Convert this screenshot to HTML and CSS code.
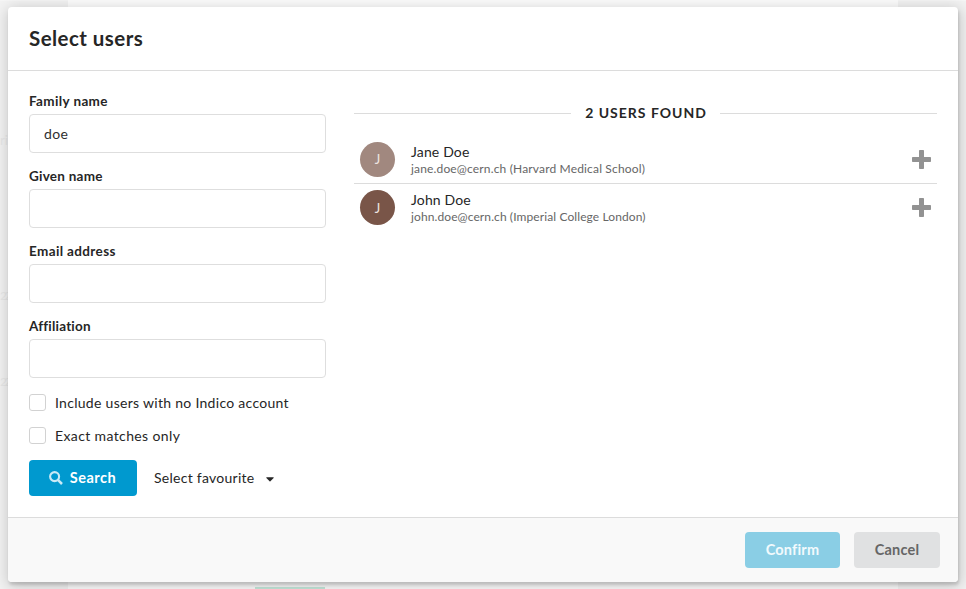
FILE: index.html
```html
<!DOCTYPE html>
<html lang="en">
<head>
<meta charset="utf-8">
<title>Select users</title>
<link rel="stylesheet" href="styles.css">
</head>
<body>
<div class="backdrop">
  <div class="side left"><span class="ghost g1">ri</span><span class="ghost g2">22</span><span class="ghost g3">22</span></div>
  <div class="page"><div class="tab"></div></div>
  <div class="side right"></div>
</div>
<main class="modal">
  <header class="header"><h1><span class="t-title">Select users</span></h1></header>
  <div class="content">
    <form class="form">
      <div class="field"><label class="l-family" for="family">Family name</label><input id="family" type="text" value="doe"></div>
      <div class="field"><label class="l-given" for="given">Given name</label><input id="given" type="text"></div>
      <div class="field"><label class="l-email" for="email">Email address</label><input id="email" type="text"></div>
      <div class="field"><label class="l-aff" for="aff">Affiliation</label><input id="aff" type="text"></div>
      <label class="check"><span class="box"></span><span class="t-include">Include users with no Indico account</span></label>
      <label class="check"><span class="box"></span><span class="t-exact">Exact matches only</span></label>
      <div class="actions">
        <button class="btn primary" type="button">
          <svg class="search-icon" viewBox="0 0 14 14"><circle cx="5.6" cy="5.6" r="4.5" fill="none" stroke="currentColor" stroke-width="2.1"/><path d="M8.9 8.9L13 13" stroke="currentColor" stroke-width="2.5"/></svg>
          <span class="t-search">Search</span>
        </button>
        <div class="dropdown"><span class="t-fav">Select favourite</span><svg class="caret" viewBox="0 0 8 5"><path d="M.6 .3H7.4Q8 .4 7.6 .9L4.4 4.3Q4 4.7 3.6 4.3L.4 .9Q0 .4 .6 .3Z" fill="currentColor"/></svg></div>
      </div>
    </form>
    <section class="results">
      <h2 class="divider"><span class="t-found">2 USERS FOUND</span></h2>
      <ul class="list">
        <li class="user">
          <span class="avatar light">J</span>
          <div class="info"><div class="name"><span class="t-jane">Jane Doe</span></div><div class="mail"><span class="t-mail1">jane.doe@cern.ch (Harvard Medical School)</span></div></div>
          <svg class="plus" viewBox="0 0 19 19"><path d="M7.8 0h3.4q.8 0 .8.8V7h6.2q.8 0 .8.8v3.4q0 .8-.8.8H12v6.2q0 .8-.8.8H7.8q-.8 0-.8-.8V12H.8q-.8 0-.8-.8V7.8Q0 7 .8 7H7V.8Q7 0 7.8 0Z" fill="currentColor"/></svg>
        </li>
        <li class="user">
          <span class="avatar dark">J</span>
          <div class="info"><div class="name"><span class="t-john">John Doe</span></div><div class="mail"><span class="t-mail2">john.doe@cern.ch (Imperial College London)</span></div></div>
          <svg class="plus" viewBox="0 0 19 19"><path d="M7.8 0h3.4q.8 0 .8.8V7h6.2q.8 0 .8.8v3.4q0 .8-.8.8H12v6.2q0 .8-.8.8H7.8q-.8 0-.8-.8V12H.8q-.8 0-.8-.8V7.8Q0 7 .8 7H7V.8Q7 0 7.8 0Z" fill="currentColor"/></svg>
        </li>
      </ul>
    </section>
  </div>
  <footer class="footer">
    <button class="btn confirm" type="button"><span class="t-confirm">Confirm</span></button>
    <button class="btn cancel" type="button"><span class="t-cancel">Cancel</span></button>
  </footer>
</main>
</body>
</html>
```

FILE: styles.css
```css
* { box-sizing: border-box; }
html, body { height: 100%; }
body { margin: 0; padding: 7px 8px; overflow: hidden; font-family: Lato, "Open Sans", sans-serif; font-size: 14px; color: #262626; background: #fdfdfd; }

.backdrop { position: absolute; inset: 0; display: flex; }
.side { width: 68px; background: #f3f3f3; border-top: 1px solid #f6f6f6; position: relative; }
.page { flex: 1; display: flex; align-items: flex-end; padding-left: 187px; }
.tab { width: 70px; height: 2px; background: #c6e9dc; }
.ghost { position: absolute; left: 0; font-size: 13px; line-height: 16px; color: #e8e8e8; }
.g1 { top: 131px; }
.g2 { top: 287px; font-size: 12px; letter-spacing: -2.6px; }
.g3 { top: 373px; font-size: 12px; letter-spacing: -2.6px; }

.modal { position: relative; display: flex; flex-direction: column; width: 950px; height: 575px; background: #fff; border-radius: 4px; box-shadow: 1px 3px 3px rgba(0, 0, 0, .14), 1px 3px 15px 2px rgba(0, 0, 0, .18); }
.header { height: 64px; padding: 0 21px; border-bottom: 1px solid #dcdcdc; }
h1 { margin: 0; font-size: 20.5px; line-height: 62px; font-weight: 700; }
.content { flex: 1; display: flex; gap: 28px; padding: 21px 21px 0; }
.form { width: 297px; }
.field { height: 75px; }
.field label { display: block; width: max-content; height: 22px; line-height: 19px; font-size: 13.5px; font-weight: 700; }
.field input { display: block; width: 100%; height: 39px; padding: 0 14px 1px; border: 1px solid #dedede; border-radius: 4px; font: 14px/20px Lato, sans-serif; letter-spacing: .3px; color: #303030; outline: none; background: #fff; }
.check { display: flex; align-items: flex-start; gap: 9px; width: max-content; height: 33px; line-height: 20px; font-size: 14px; position: relative; top: 1px; }
.box { width: 17px; height: 17px; margin-top: 1px; border: 1px solid #d2d2d2; border-radius: 3px; }
.actions { display: flex; align-items: center; gap: 17px; margin-top: 2px; }
.btn { display: flex; align-items: center; justify-content: center; height: 36px; padding: 0; border: 0; border-radius: 4px; font: 700 14.5px/20px Lato, sans-serif; }
.primary { width: 108px; gap: 7px; padding-right: 1px; color: #fff; background: #0099cf; }
.search-icon { width: 14px; height: 14px; color: #c9eaf6; }
.dropdown { display: flex; align-items: center; gap: 12px; font-size: 14px; line-height: 20px; }
.caret { width: 8px; height: 5px; margin: 2px 0 0 -1px; }

.results { flex: 1; }
.divider { display: flex; align-items: center; gap: 14px; height: 42px; margin: 0; font-size: 14px; line-height: 20px; font-weight: 700; }
.divider::before, .divider::after { content: ""; flex: 1; height: 1px; background: #dcdcdc; }
.list { margin: 0; padding: 0; list-style: none; }
.user { display: flex; align-items: center; height: 49px; padding: 1px 6px 0; }
.user + .user { height: 48px; border-top: 1px solid #dcdcdc; padding-top: 0; }
.avatar { display: flex; align-items: center; justify-content: center; width: 35px; height: 35px; border-radius: 50%; font-size: 13px; color: #eee5e1; }
.light { background: #a1887f; }
.dark { background: #795548; }
.info { flex: 1; padding: 1px 0 0 16px; }
.name { font-size: 14px; line-height: 18px; }
.mail { font-size: 12px; line-height: 16px; color: #666; }
.plus { width: 19px; height: 19px; color: #929292; }

.footer { display: flex; justify-content: flex-end; gap: 14px; height: 65px; padding: 14px 18px 0; background: #f9f9f9; border-top: 1px solid #dcdcdc; border-radius: 0 0 4px 4px; }
.confirm { width: 95px; color: #f2fafd; background: #8acee5; }
.cancel { width: 86px; color: #666; background: #e0e1e2; }

.t-title { letter-spacing: .45px; }
.l-family { letter-spacing: .38px; }
.l-given { letter-spacing: .25px; }
.l-email { letter-spacing: .37px; }
.l-aff { letter-spacing: .2px; }
.t-include { letter-spacing: .29px; }
.t-exact { letter-spacing: .38px; }
.t-search { letter-spacing: .5px; }
.t-fav { letter-spacing: .27px; }
.t-found { letter-spacing: 1px; margin-right: -1px; }
.t-jane, .t-john { letter-spacing: .15px; }
.t-mail1 { letter-spacing: .16px; }
.t-mail2 { letter-spacing: .1px; }
.t-confirm { letter-spacing: .2px; }
.t-cancel { letter-spacing: .22px; }
```
